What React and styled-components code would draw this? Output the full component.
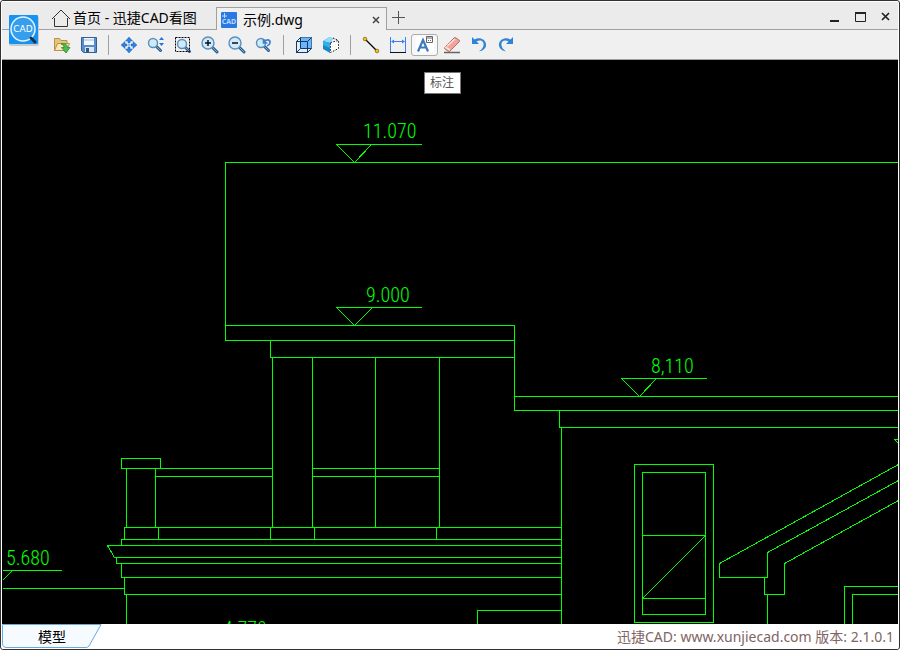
import React from "react";
import styled, { createGlobalStyle, css } from "styled-components";

const GlobalStyle = createGlobalStyle`
  * { box-sizing: border-box; }
  body {
    margin: 0;
    background: #fff;
    font-family: "Noto Sans", "Noto Sans CJK SC", sans-serif;
    font-size: 14px;
    color: #000;
  }
  button { font: inherit; color: inherit; }
`;

const Window = styled.div`
  position: relative;
  display: flex;
  flex-direction: column;
  height: 100vh;
  border: 1px solid #333033;
  border-radius: 3px;
  padding: 0 1px;
  background: #fff;
  overflow: hidden;
`;

const AppLogo = styled.svg`
  position: absolute;
  left: 8px;
  top: 14px;
  width: 30px;
  height: 32px;
`;

const TitleBar = styled.header`
  display: flex;
  height: 29px;
  flex: none;
  padding-left: 43px;
  background: #ebebeb;
  border-top: 1px solid #fff;
  border-bottom: 1px solid #a0a0a0;
`;

const TabList = styled.div`
  display: flex;
  align-items: flex-end;
  height: 28px;
`;

const Tab = styled.div`
  display: flex;
  align-items: center;
  height: 24px;
  padding: 0 4px;
  width: ${(p) => p.$width};
  ${(p) =>
    p.$active
      ? css`
          background: #f0f0f0;
          border: 1px solid #a0a0a0;
          border-bottom: 0;
          margin-bottom: -1px;
        `
      : css`
          padding-left: 6px;
        `}
`;

const TabLabel = styled.button`
  display: flex;
  align-items: center;
  gap: ${(p) => p.$gap};
  flex: 1;
  padding: 0;
  border: 0;
  background: none;
  line-height: 20px;
  white-space: nowrap;
`;

const PlainButton = styled.button`
  display: flex;
  align-items: center;
  justify-content: center;
  width: ${(p) => p.$width || "12px"};
  height: 24px;
  padding: 0;
  border: 0;
  background: none;
`;

const WindowControls = styled.div`
  display: flex;
  align-items: flex-end;
  margin-left: auto;
`;

const Toolbar = styled.div`
  display: flex;
  align-items: center;
  height: 30px;
  flex: none;
  padding-left: 46px;
  background: #f0f0f0;
  border-bottom: 1px solid #a0a0a0;
`;

const ToolButton = styled.button`
  display: flex;
  align-items: center;
  justify-content: center;
  width: 27px;
  height: 22px;
  padding: 0;
  border: 1px solid ${(p) => (p.$active ? "#adadad" : "transparent")};
  border-radius: 3px;
  background: ${(p) => (p.$active ? "#f8f8f8" : "none")};
`;

const Separator = styled.div`
  width: 1px;
  height: 20px;
  margin: 0 6px;
  background: #a0a0a0;
`;

const Canvas = styled.main`
  position: relative;
  flex: 1;
  min-height: 0;
  background: #000;
`;

const Drawing = styled.svg`
  display: block;
  width: 100%;
  height: 100%;
  fill: none;
  stroke: #00ff00;
  shape-rendering: crispEdges;

  text {
    fill: #00ff00;
    stroke: none;
    font-family: "Roboto Condensed", "Liberation Sans Narrow", Roboto, sans-serif;
    font-weight: 300;
    font-size: 20px;
  }
`;

const Tooltip = styled.div`
  position: absolute;
  left: 422px;
  top: 12px;
  padding: 0 6px 0 5px;
  border: 1px solid #767676;
  background: #fff;
  color: #575757;
  font-size: 12px;
  line-height: 20px;
`;

const StatusBar = styled.footer`
  display: flex;
  align-items: center;
  justify-content: space-between;
  height: 25px;
  flex: none;
  padding-right: 4px;
  background: #fff;
`;

const ModelTab = styled.button`
  position: relative;
  width: 100px;
  height: 25px;
  padding: 0;
  border: 0;
  background: none;
  line-height: 24px;
`;

const ModelTabShape = styled.svg`
  position: absolute;
  inset: 0;
`;

const ModelTabText = styled.span`
  position: relative;
`;

const Version = styled.span`
  color: #806464;
  font-size: 14px;
  line-height: 24px;
`;

function Icon({ children, size = 18 }) {
  return (
    <svg width={size} height={size} viewBox={`0 0 ${size} ${size}`} fill="none" aria-hidden="true">
      {children}
    </svg>
  );
}

const Lens = ({ cx = 7, cy = 7, r = 5, children }) => (
  <>
    <path d={`M${cx + r - 1} ${cy + r - 1}l4 4`} stroke="#2c5f8e" strokeWidth="3" strokeLinecap="round" />
    <path d={`M${cx + r - 1} ${cy + r - 1}l4 4`} stroke="#78a9cf" strokeWidth="1" strokeLinecap="round" />
    <circle cx={cx} cy={cy} r={r} fill="#cfeafa" stroke="#5b8fbb" strokeWidth="1.4" />
    {children}
  </>
);

const icons = {
  open: (
    <Icon>
      <path d="M1.500 14.500v-12h5l1.500 2h6v10z" fill="#e3c67c" stroke="#b6924b" />
      <path d="M1.500 14.500l3-7h12l-3 7z" fill="#f7e8b4" stroke="#b6924b" />
      <path d="M8 8c4-1 6 0 6.500 3.500h2.500l-4 5.500-4.500-5.500h2.500c0-2-1-3-3-3.500z" fill="#4fba50" stroke="#258a32" strokeWidth=".8" />
    </Icon>
  ),
  save: (
    <Icon>
      <path d="M1.500 1.500h15v15h-13l-2-2z" fill="#568fcc" stroke="#315f9a" />
      <path d="M4 2h10v7H4z" fill="#f3f8fd" />
      <path d="M4 4h10" stroke="#9dbbe0" />
      <path d="M5 11h9v5H5z" fill="#dce6f1" />
      <path d="M6 12h3v4H6z" fill="#35567d" />
    </Icon>
  ),
  pan: (
    <Icon>
      <path
        d="M9 1l3.500 4H10v2H8V5H5.500zM9 17l3.500-4H10v-2H8v2H5.500zM1 9l4-3.500V8h2v2H5v2.500zM17 9l-4-3.500V8h-2v2h2v2.500z"
        fill="#2e80dd"
        stroke="#1e68c3"
        strokeWidth=".5"
      />
      <path d="M8 8h2v2H8z" fill="#8ac1f3" />
    </Icon>
  ),
  zoomDynamic: (
    <Icon>
      <Lens cx={6} cy={7} r={4.5} />
      <path d="M14.500 1l2.500 3h-5zM14.500 10l2.500-3h-5z" fill="#2374dc" />
    </Icon>
  ),
  zoomWindow: (
    <Icon>
      <Lens cx={8} cy={8} r={4.5} />
      <path d="M1.500 1.500h14v14h-14z" stroke="#000" strokeDasharray="2 1" />
    </Icon>
  ),
  zoomIn: (
    <Icon>
      <Lens cx={7} cy={7} r={6}>
        <path d="M7 4v6M4 7h6" stroke="#111" strokeWidth="1.500" />
      </Lens>
    </Icon>
  ),
  zoomOut: (
    <Icon>
      <Lens cx={7} cy={7} r={6}>
        <path d="M4 7h6" stroke="#111" strokeWidth="1.500" />
      </Lens>
    </Icon>
  ),
  zoomPrevious: (
    <Icon>
      <Lens cx={6} cy={7} r={4.5} />
      <path d="M8.500 3v4h4M9 6.500c2-4 6.500-3 6 .5-.3 2-1.500 2.500-3 3" stroke="#3f82ca" strokeWidth="1.700" />
    </Icon>
  ),
  cube: (
    <Icon>
      <path d="M1.500 5.500l4-4h11v11l-4 4h-11z" fill="#e1effc" stroke="#123a67" />
      <path d="M5.500 1.500h11v11h-11z" fill="#6eb5f8" />
      <path d="M1.500 5.500h11v11h-11zM12.500 5.500l4-4M5.500 1.500v11h11M1.500 16.500l4-4" stroke="#123a67" />
    </Icon>
  ),
  halfCube: (
    <Icon>
      <path d="M1 5l6-3.500 4 .5-3 5v10l-7-4z" fill="#1588c9" />
      <path d="M1 5l6-3.500 5 1L8 7z" fill="#8ddcff" />
      <path d="M1 5l7 2v5L1 9z" fill="#35aee8" />
      <path d="M8.500 6.500l8-2v8l-8 4z" fill="#fff" stroke="#111" strokeDasharray="1.500 1.500" />
      <path d="M11 2l5.500 2.500" stroke="#111" strokeDasharray="1.500 1.500" />
    </Icon>
  ),
  line: (
    <Icon>
      <path d="M3 3l12 12" stroke="#000" strokeWidth="1.200" />
      <circle cx="3" cy="3" r="1.800" fill="#f4c51f" stroke="#8a6500" strokeWidth=".8" />
      <circle cx="15" cy="15" r="1.800" fill="#f4c51f" stroke="#8a6500" strokeWidth=".8" />
    </Icon>
  ),
  dimension: (
    <Icon>
      <path d="M1.500 1v15M16.500 1v15M3 5.500h12" stroke="#3b80ed" />
      <path d="M2 5.500L5 3.500v4zM16 5.500l-3-2v4z" fill="#3b80ed" />
      <path d="M1 16.500h16" stroke="#111" />
    </Icon>
  ),
  text: (
    <Icon>
      <path d="M0 1h18v15H0z" fill="#fff" />
      <path d="M2 15.500L7 4l5 11.500M4 11.500h6" stroke="#3d7abd" strokeWidth="2.200" />
      <path d="M10.500.5h6v6h-6z" fill="#fff" stroke="#666" />
      <path d="M11 2h5M12 4.500h1M14 4.500h1" stroke="#666" />
    </Icon>
  ),
  eraser: (
    <Icon>
      <path d="M1 16.500h16" stroke="#666" strokeWidth="1.500" />
      <path d="M2 11L11 2q1-1 2 0l3 2q1 1 0 2L7 15q-1 1-2 0l-3-2q-1-1 0-2z" fill="#f0a49c" stroke="#b56d69" />
      <path d="M2 11l5 3M4 10l8-7" stroke="#ffe1dc" strokeWidth="1.500" />
    </Icon>
  ),
  undo: (
    <Icon>
      <path d="M2 1v7h7L6.500 5.500c4-2.500 8 0 7 4-.5 2.500-2 4-4.500 6 5-1 7.500-4 7-7.500C15.500 3 9 .500 4.500 3.500z" fill="#2f83d7" />
    </Icon>
  ),
  redo: (
    <Icon>
      <path d="M16 1v7H9l2.500-2.500c-4-2.500-8 0-7 4 .5 2.500 2 4 4.500 6-5-1-7.500-4-7-7.500C2.500 3 9 .500 13.500 3.500z" fill="#2f83d7" />
    </Icon>
  ),
};

const toolGroups = [
  [["打开", "open"], ["保存", "save"]],
  [
    ["平移", "pan"],
    ["动态缩放", "zoomDynamic"],
    ["窗口缩放", "zoomWindow"],
    ["放大", "zoomIn"],
    ["缩小", "zoomOut"],
    ["上一视图", "zoomPrevious"],
  ],
  [["三维视图", "cube"], ["剖切", "halfCube"]],
  [
    ["直线", "line"],
    ["尺寸", "dimension"],
    ["标注", "text"],
    ["删除", "eraser"],
    ["撤销", "undo"],
    ["重做", "redo"],
  ],
];

const labels = [
  { x: 363, y: 138, value: "11.070" },
  { x: 366, y: 302, value: "9.000" },
  { x: 651, y: 373, value: "8,110" },
  { x: 6, y: 565, value: "5.680" },
  { x: 223, y: 636, value: "4.770" },
];

const outlines = [
  "M336 144H421M336 144L354 162L371 144",
  "M336 307H421M336 307L354 325L372 307",
  "M621 378H706M621 378L639 396L656 378",
  "M2 570H61M12 570L2 580",
  "M898 162H225V340H514M225 325H514V410H898M514 396H898",
  "M270 340V357H514M559 410V427H898M561 427V624",
  "M272 357V527M312 357V527M375 357V527M439 357V527",
  "M312 468H439M312 476H439M155 476H272",
  "M121 468V458H160V468M121 468H272M126 468V527M155 468V527",
  "M561 527H124V539M158 527V539M270 527V539M314 527V539M436 527V539",
  "M561 539H121V545M561 545H107L114 557H561M116 557V563H561",
  "M121 563V577H561M124 577V594H561M126 594V624M2 588H124",
  "M561 610H477V624",
  "M634 464H713V622H634ZM642 472H705V614H642ZM642 535H705L642 598H705",
  "M898 464L719 563V577H767V552L898 480",
  "M764 577V594H784V563L898 500M767 594V624",
  "M898 586H844V624M898 594H852V624",
  "M898 439H894L898 443",
];

function Logo() {
  return (
    <AppLogo viewBox="0 0 30 32" aria-label="CAD">
      <rect x="0" y="1" width="30" height="30" rx="2" fill="#c5cbd0" />
      <rect x="0" y="0" width="29" height="29" rx="1" fill="#1693f0" />
      <circle cx="14" cy="14" r="12" fill="#369fed" stroke="#e4f5ff" strokeWidth="1.500" />
      <path d="M22 23l4 4" stroke="#17344c" strokeWidth="3" strokeLinecap="round" />
      <text x="14" y="17" textAnchor="middle" fontFamily="DejaVu Sans, sans-serif" fontSize="9" fill="#fff">
        CAD
      </text>
    </AppLogo>
  );
}

export default function App() {
  return (
    <>
      <GlobalStyle />
      <Window>
        <TitleBar>
          <TabList>
            <Tab $width="171px">
              <TabLabel $gap="2px">
                <Icon size={20}>
                  <path d="M1 11L10 2l9 9M3.500 10v8.500h13V10" stroke="#333" />
                </Icon>
                首页 - 迅捷CAD看图
              </TabLabel>
            </Tab>
            <Tab $active $width="171px">
              <TabLabel $gap="6px">
                <Icon size={16}>
                  <rect width="16" height="16" rx="1" fill="#2b78e4" />
                  <path d="M1 4h5M3.500 1v5" stroke="#b5dcff" />
                  <text x="8" y="12" textAnchor="middle" fontSize="7" fontWeight="700" fill="#b5dcff">
                    CAD
                  </text>
                </Icon>
                示例.dwg
              </TabLabel>
              <PlainButton aria-label="关闭标签">
                <Icon size={8}>
                  <path d="M1 1l6 6M7 1L1 7" stroke="#444" strokeWidth="1.500" />
                </Icon>
              </PlainButton>
            </Tab>
            <PlainButton $width="24px" aria-label="新建标签">
              <Icon size={14}>
                <path d="M6.500 0v13M0 6.500h13" stroke="#555" />
              </Icon>
            </PlainButton>
          </TabList>
          <WindowControls>
            <PlainButton $width="27px" aria-label="最小化">
              <Icon size={12}>
                <path d="M2 10h9" stroke="#222" strokeWidth="2" />
              </Icon>
            </PlainButton>
            <PlainButton $width="27px" aria-label="最大化">
              <Icon size={12}>
                <path d="M.5 2v8.500h10V2" stroke="#222" />
                <path d="M0 2h11" stroke="#222" strokeWidth="2" />
              </Icon>
            </PlainButton>
            <PlainButton $width="24px" aria-label="关闭">
              <Icon size={10}>
                <path d="M1 1l7 7M8 1L1 8" stroke="#222" strokeWidth="1.700" />
              </Icon>
            </PlainButton>
          </WindowControls>
        </TitleBar>

        <Toolbar role="toolbar">
          {toolGroups.map((group, index) => (
            <React.Fragment key={index}>
              {index > 0 && <Separator />}
              {group.map(([label, icon]) => (
                <ToolButton key={icon} aria-label={label} $active={icon === "text"}>
                  {icons[icon]}
                </ToolButton>
              ))}
            </React.Fragment>
          ))}
        </Toolbar>
        <Logo />

        <Canvas>
          <Drawing viewBox="2 60 896 564" preserveAspectRatio="xMinYMin slice">
            <g transform="translate(.5 .5)">
              {outlines.map((d) => (
                <path key={d} d={d} />
              ))}
            </g>
            {labels.map(({ x, y, value }) => (
              <text key={value} x={x} y={y}>
                {value}
              </text>
            ))}
          </Drawing>
          <Tooltip role="tooltip">标注</Tooltip>
        </Canvas>

        <StatusBar>
          <ModelTab>
            <ModelTabShape width="100" height="25" viewBox="0 0 100 25" aria-hidden="true">
              <path d="M.5.5H99L87 22q-1 1.500-3 1.500H5q-4.500 0-4.500-4z" fill="#f5fbff" stroke="#6ba8dc" />
            </ModelTabShape>
            <ModelTabText>模型</ModelTabText>
          </ModelTab>
          <Version>迅捷CAD: www.xunjiecad.com 版本: 2.1.0.1</Version>
        </StatusBar>
      </Window>
    </>
  );
}
